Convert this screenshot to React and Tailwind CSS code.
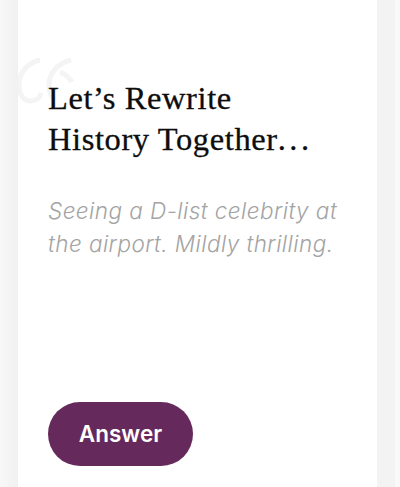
export default function App() {
  return (
    <div className="flex h-[487px] w-[400px] overflow-hidden bg-[#f3f3f3]">
      <div className="w-[18px] shrink-0 bg-gradient-to-r from-[#f8f8f8] to-[#f1f1f1]" />
      <div className="relative flex h-full w-[359px] shrink-0 flex-col bg-white pt-[78px] pl-[30px]">
        <svg className="absolute top-[56px] left-0" width="58" height="50" viewBox="0 0 58 50" fill="none" stroke="#f4f4f4" strokeWidth="5" aria-hidden="true">
          <path d="M22 4C10 7 1 16 1 29C1 39 6 45 13 45C18 45 22 42 23 37" />
          <path d="M53 4C41 7 31 16 31 29C31 36 33 41 37 44" />
          <path d="M42 16C47 18 51 21 54 26" />
        </svg>
        <h1 className="relative font-['Liberation_Serif',serif] text-[32.5px] leading-[41px] font-normal tracking-[0.6px] text-[#0d0d0d] [-webkit-text-stroke:0.3px_#0d0d0d]">
          Let’s Rewrite
          <br />
          History Together<span className="tracking-[3.5px]">...</span>
        </h1>
        <p className="relative mt-[34px] w-[310px] font-['Inter',sans-serif] text-[22.5px] leading-[33px] font-light tracking-[0.45px] text-[#a4a4a4] italic [font-feature-settings:'cv11']">
          Seeing a D-list celebrity at the airport. Mildly thrilling.
        </p>
        <button className="mt-auto mb-[21px] flex h-[64px] w-[145px] items-center justify-center rounded-full bg-[#66295c] font-['Inter',sans-serif] text-[22.5px] font-semibold text-white">
          Answer
        </button>
      </div>
      <div className="w-[18px] shrink-0 bg-[#f3f3f3]" />
      <div className="w-[5px] shrink-0 bg-[#f9f9f9]" />
    </div>
  );
}
